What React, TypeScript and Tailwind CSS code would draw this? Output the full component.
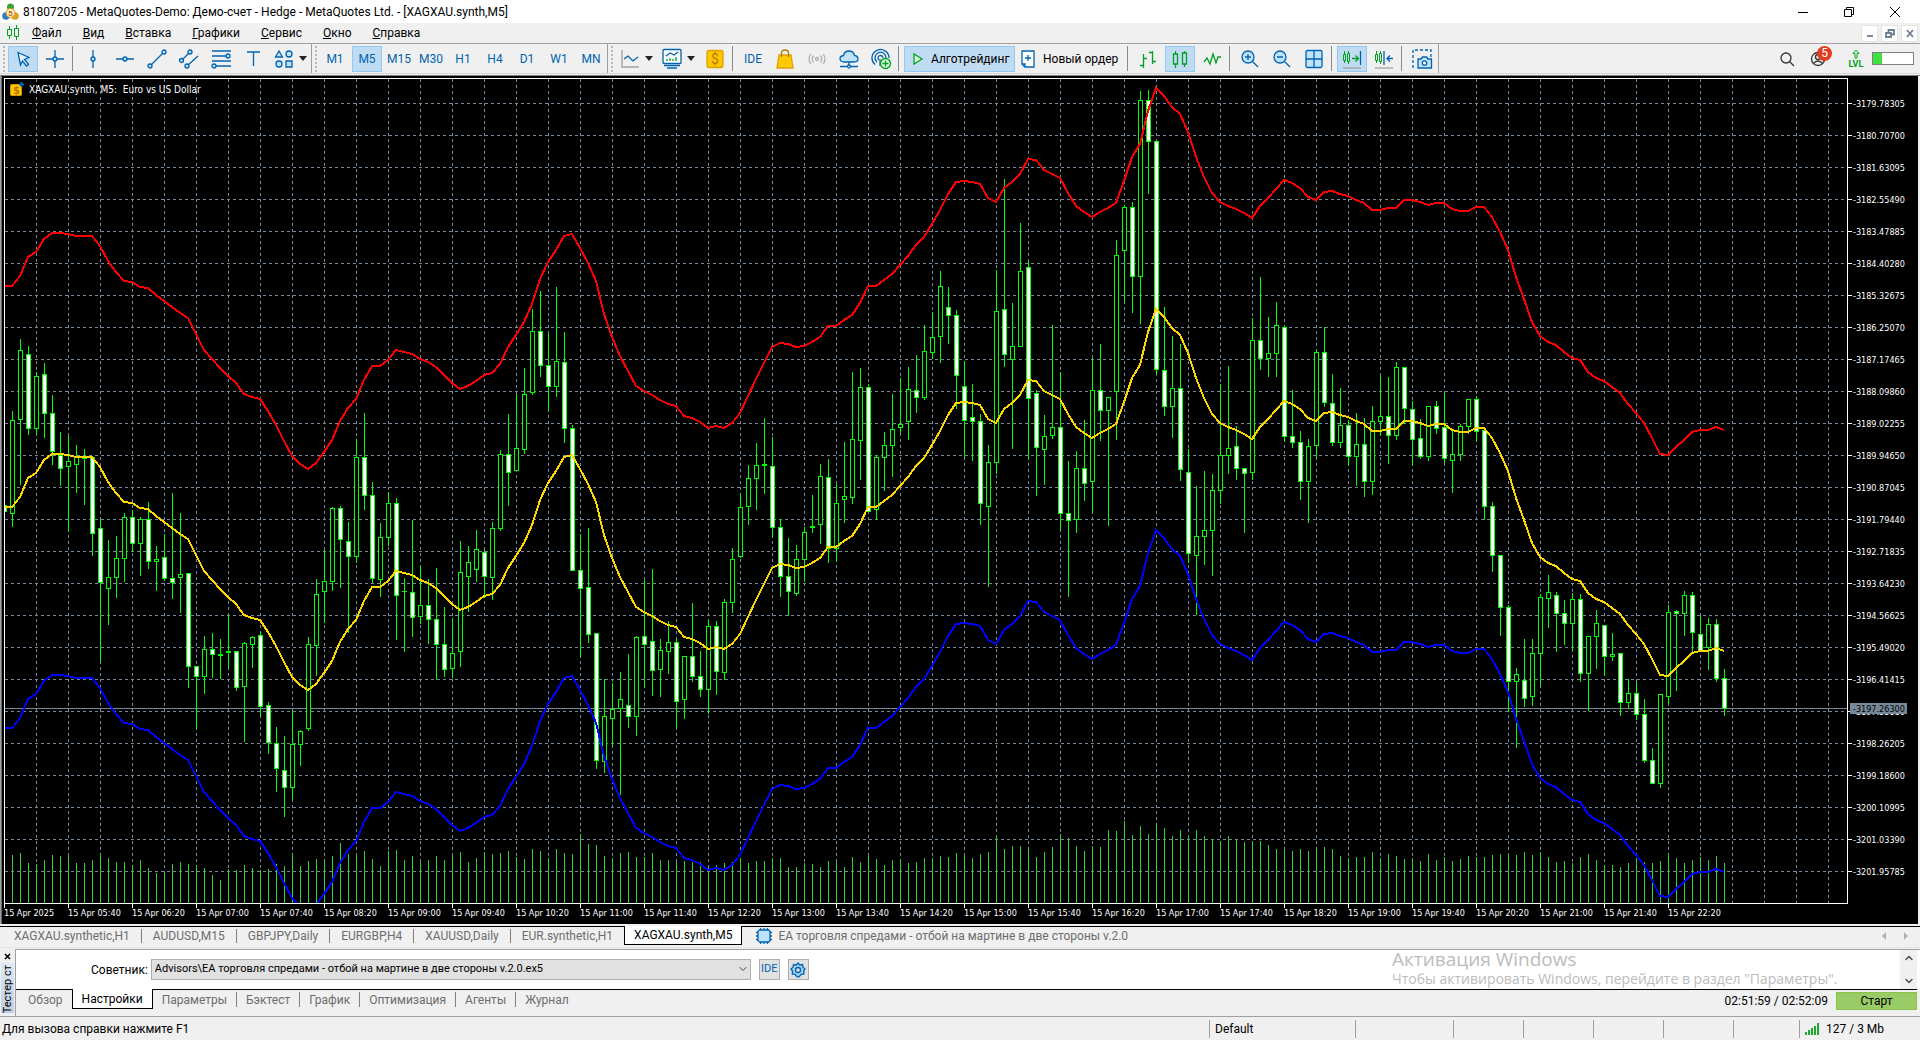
import type { ReactNode } from 'react';
import { ChevronDown, ChevronUp } from 'lucide-react';

// [high, body top, body bottom, low, 1 = rising / 0 = falling], in chart pixels
type Bar = [number, number, number, number, number];

const bars: Bar[] = [
  [505, 505, 511, 511, 0], [411, 420, 513, 526, 1], [339, 350, 419, 484, 1], [346, 354, 428, 434, 0], [372, 376, 428, 434, 1],
  [363, 374, 413, 437, 0], [395, 413, 451, 464, 0], [432, 455, 468, 485, 0], [436, 461, 466, 531, 1], [445, 456, 464, 492, 1],
  [449, 457, 458, 504, 1], [457, 457, 533, 555, 0], [519, 528, 582, 661, 0], [540, 577, 588, 624, 1], [536, 558, 577, 597, 1],
  [513, 517, 558, 581, 1], [510, 517, 543, 551, 0], [517, 519, 543, 575, 1], [502, 519, 561, 568, 0], [546, 559, 561, 590, 1],
  [534, 557, 578, 580, 0], [493, 578, 582, 598, 0], [513, 574, 577, 612, 1], [573, 573, 666, 687, 0], [666, 666, 676, 728, 0],
  [636, 649, 676, 693, 1], [633, 649, 654, 677, 0], [639, 654, 655, 678, 1], [615, 651, 652, 667, 1], [651, 651, 687, 690, 0],
  [642, 643, 686, 741, 1], [636, 637, 644, 667, 1], [632, 635, 706, 716, 0], [702, 705, 742, 753, 0], [727, 743, 768, 791, 0],
  [736, 770, 787, 816, 0], [710, 744, 787, 798, 1], [730, 731, 744, 765, 1], [637, 644, 728, 730, 1], [579, 594, 645, 675, 1],
  [550, 581, 591, 622, 1], [507, 508, 581, 590, 1], [506, 508, 539, 587, 0], [522, 541, 556, 632, 0], [439, 457, 556, 562, 1],
  [413, 457, 495, 509, 0], [482, 495, 578, 582, 0], [523, 537, 579, 596, 1], [492, 503, 537, 545, 1], [498, 503, 595, 639, 0],
  [578, 591, 591, 651, 1], [520, 592, 617, 636, 0], [566, 605, 616, 623, 1], [579, 605, 619, 643, 0], [568, 619, 644, 679, 0],
  [607, 644, 669, 676, 0], [618, 653, 668, 677, 1], [541, 572, 651, 666, 1], [546, 562, 576, 611, 1], [530, 549, 569, 581, 1],
  [550, 552, 576, 597, 0], [522, 528, 577, 599, 1], [450, 454, 528, 530, 1], [414, 454, 472, 505, 0], [394, 448, 470, 470, 1],
  [368, 394, 449, 453, 1], [309, 331, 392, 394, 1], [291, 331, 365, 376, 0], [334, 365, 386, 410, 0], [287, 361, 386, 396, 1],
  [332, 362, 428, 442, 0], [425, 428, 570, 570, 0], [534, 570, 588, 656, 0], [528, 587, 634, 642, 0], [633, 633, 760, 768, 0],
  [679, 716, 761, 772, 1], [683, 709, 718, 745, 1], [672, 699, 708, 794, 1], [654, 705, 716, 727, 0], [636, 637, 716, 735, 1],
  [580, 636, 644, 687, 0], [569, 641, 670, 695, 0], [639, 650, 669, 696, 1], [621, 642, 651, 673, 1], [639, 642, 701, 727, 0],
  [656, 656, 699, 718, 1], [603, 656, 676, 681, 0], [651, 676, 689, 696, 0], [620, 626, 689, 713, 1], [621, 626, 671, 694, 0],
  [599, 602, 672, 679, 1], [548, 559, 602, 612, 1], [493, 507, 556, 557, 1], [465, 478, 506, 524, 1], [443, 465, 478, 509, 1],
  [418, 464, 465, 493, 1], [437, 466, 527, 537, 0], [519, 527, 576, 596, 0], [538, 576, 591, 615, 0], [545, 559, 593, 595, 1],
  [527, 532, 559, 581, 1], [495, 526, 527, 532, 1], [464, 476, 524, 543, 1], [459, 477, 548, 562, 0], [484, 503, 548, 561, 1],
  [442, 496, 499, 522, 1], [372, 439, 497, 503, 1], [368, 387, 440, 479, 1], [384, 387, 511, 511, 0], [455, 457, 509, 519, 1],
  [432, 445, 457, 490, 1], [394, 429, 445, 476, 1], [378, 424, 427, 432, 1], [367, 389, 421, 439, 1], [355, 390, 397, 412, 0],
  [325, 351, 397, 399, 1], [312, 337, 352, 358, 1], [271, 286, 336, 362, 1], [287, 307, 315, 343, 0], [310, 315, 375, 408, 0],
  [361, 386, 420, 457, 0], [384, 417, 421, 460, 0], [414, 421, 503, 524, 0], [445, 462, 506, 586, 1], [270, 311, 462, 473, 1],
  [179, 309, 354, 366, 0], [303, 346, 359, 448, 1], [223, 271, 346, 346, 1], [261, 267, 398, 458, 0], [390, 393, 447, 495, 0],
  [415, 436, 449, 484, 1], [325, 427, 435, 438, 1], [372, 427, 513, 529, 0], [461, 513, 520, 596, 0], [451, 468, 519, 532, 1],
  [420, 468, 483, 500, 0], [358, 390, 481, 512, 1], [344, 390, 410, 440, 0], [397, 397, 410, 525, 1], [240, 255, 391, 439, 1],
  [205, 207, 250, 300, 1], [202, 207, 276, 312, 0], [91, 100, 276, 323, 1], [90, 100, 141, 193, 0], [141, 141, 369, 373, 0],
  [307, 370, 406, 415, 0], [336, 388, 406, 437, 1], [344, 388, 469, 480, 0], [449, 472, 553, 562, 0], [486, 536, 555, 614, 1],
  [471, 530, 536, 564, 1], [474, 490, 530, 575, 1], [384, 455, 490, 503, 1], [366, 448, 455, 473, 1], [426, 446, 468, 479, 0],
  [468, 468, 473, 532, 0], [318, 340, 472, 479, 1], [277, 340, 358, 369, 0], [317, 353, 358, 376, 1], [302, 325, 353, 376, 1],
  [326, 327, 436, 441, 0], [390, 436, 442, 447, 0], [431, 442, 481, 499, 0], [439, 446, 481, 522, 1], [350, 352, 445, 457, 1],
  [327, 352, 402, 406, 0], [374, 403, 442, 445, 0], [388, 425, 442, 447, 1], [420, 425, 456, 465, 0], [413, 444, 456, 485, 1],
  [418, 444, 481, 496, 0], [406, 421, 481, 494, 1], [375, 416, 421, 435, 1], [377, 416, 435, 463, 0], [362, 367, 435, 439, 1],
  [367, 367, 408, 423, 0], [401, 409, 439, 465, 0], [419, 438, 456, 458, 0], [406, 406, 456, 460, 1], [401, 406, 428, 433, 0],
  [393, 427, 458, 462, 0], [429, 454, 460, 492, 1], [424, 426, 454, 460, 1], [399, 399, 426, 433, 1], [396, 399, 431, 441, 0],
  [428, 430, 506, 519, 0], [502, 506, 555, 571, 0], [555, 555, 607, 635, 0], [605, 607, 681, 711, 0], [668, 674, 681, 747, 1],
  [639, 680, 698, 706, 0], [639, 653, 696, 705, 1], [594, 597, 653, 684, 1], [575, 592, 598, 627, 1], [592, 595, 613, 651, 0],
  [600, 613, 623, 644, 0], [593, 599, 623, 650, 1], [594, 599, 673, 681, 0], [636, 636, 673, 710, 1], [610, 623, 636, 668, 1],
  [625, 625, 656, 675, 0], [633, 654, 656, 660, 1], [653, 653, 702, 715, 0], [679, 693, 702, 707, 1], [682, 693, 714, 719, 0],
  [699, 714, 760, 762, 0], [748, 760, 783, 783, 0], [694, 694, 783, 787, 1], [605, 612, 696, 703, 1], [610, 611, 613, 690, 0],
  [591, 595, 613, 635, 1], [592, 595, 632, 651, 0], [616, 634, 650, 650, 0], [618, 624, 647, 669, 1], [619, 624, 678, 681, 0],
  [669, 678, 708, 715, 0],
];

const middle = [
  507, 507, 497, 478, 473, 460, 454, 454, 455, 457, 457, 457, 467, 482, 493, 502, 503, 508, 509, 516,
  522, 528, 534, 539, 555, 571, 580, 589, 597, 604, 615, 618, 620, 632, 646, 662, 677, 685, 690, 684,
  673, 661, 642, 629, 620, 601, 587, 587, 581, 571, 573, 575, 580, 583, 588, 596, 604, 610, 607, 602,
  596, 594, 585, 568, 556, 543, 525, 500, 483, 471, 457, 455, 469, 484, 502, 535, 558, 577, 592, 607,
  612, 616, 621, 625, 627, 637, 639, 643, 649, 647, 649, 644, 634, 617, 600, 584, 568, 564, 565, 568,
  567, 563, 558, 547, 547, 541, 536, 524, 507, 507, 501, 495, 486, 477, 466, 458, 445, 431, 415, 403,
  402, 403, 405, 419, 423, 409, 403, 395, 380, 381, 391, 395, 399, 414, 427, 433, 438, 433, 429, 424,
  402, 378, 365, 332, 309, 317, 328, 335, 353, 378, 398, 414, 423, 427, 430, 434, 439, 427, 419, 410,
  401, 404, 409, 418, 421, 413, 412, 415, 417, 421, 424, 431, 431, 429, 429, 421, 421, 423, 426, 424,
  424, 430, 432, 432, 428, 428, 438, 453, 471, 498, 520, 543, 557, 563, 566, 573, 579, 581, 593, 599,
  602, 608, 614, 625, 634, 644, 659, 675, 676, 668, 661, 653, 651, 651, 648, 651,
];

const volumes = [
  903, 855, 853, 863, 864, 860, 855, 856, 855, 863, 863, 860, 853, 858, 862, 862, 865, 860, 868, 873,
  873, 864, 862, 864, 865, 868, 875, 880, 869, 870, 865, 868, 870, 869, 864, 866, 853, 866, 861, 859,
  860, 856, 843, 854, 855, 851, 859, 866, 851, 850, 860, 856, 862, 860, 856, 860, 855, 852, 862, 858,
  852, 854, 853, 851, 857, 859, 849, 851, 858, 849, 853, 854, 834, 844, 845, 856, 858, 853, 852, 857,
  857, 853, 860, 860, 862, 861, 862, 862, 867, 865, 863, 862, 858, 863, 861, 861, 858, 858, 867, 867,
  863, 864, 867, 861, 862, 867, 857, 862, 856, 859, 865, 860, 859, 863, 862, 858, 858, 856, 857, 853,
  855, 858, 854, 852, 835, 849, 846, 846, 849, 857, 852, 847, 834, 838, 846, 851, 846, 847, 830, 831,
  821, 835, 826, 834, 824, 828, 836, 830, 836, 830, 836, 839, 841, 836, 840, 842, 842, 841, 845, 849,
  850, 851, 849, 851, 849, 847, 849, 856, 858, 857, 857, 852, 858, 854, 856, 859, 858, 861, 854, 860,
  857, 861, 859, 856, 857, 857, 855, 854, 854, 855, 852, 855, 852, 857, 862, 861, 863, 857, 854, 860,
  865, 865, 867, 863, 858, 862, 863, 861, 853, 858, 863, 860, 857, 860, 856, 863,
];

const BAND = 221;
const barX = (i: number) => 4 + i * 8;
const linePoints = (shift: number) => middle.map((y, i) => `${barX(i)},${y + shift}`).join(' ');

const columns = Array.from({ length: 57 }, (_, i) => 36 + i * 32);
const rows = Array.from({ length: 25 }, (_, i) => 103 + i * 32);

const timeLabel = (i: number) => {
  if (i === 0) return '15 Apr 2025';
  const minutes = 300 + i * 40;
  const hh = String(Math.floor(minutes / 60)).padStart(2, '0');
  const mm = String(minutes % 60).padStart(2, '0');
  return `15 Apr ${hh}:${mm}`;
};

function PriceChart() {
  return (
    <svg
      viewBox="0 76 1920 848"
      className="block h-auto w-full bg-black font-['DejaVu_Sans_Condensed',sans-serif] text-[9px]"
      role="img"
      aria-label="XAGXAU.synth, M5"
    >
      <defs>
        <clipPath id="plot">
          <rect x="5" y="79" width="1843" height="824" />
        </clipPath>
      </defs>
      <g shapeRendering="crispEdges">
        <rect x="0" y="76" width="1" height="848" fill="#a0a0a0" />
        <rect x="1" y="76" width="1" height="848" fill="#696969" />
        <rect x="1918" y="76" width="2" height="848" fill="#f0f0f0" />

        {/* Grid */}
        <g stroke="#778899" strokeDasharray="3 3">
          {columns.map((x) => (
            <line key={x} x1={x + 0.5} x2={x + 0.5} y1="79" y2="903" />
          ))}
          {rows.map((y) => (
            <line key={y} x1="5" x2="1848" y1={y + 0.5} y2={y + 0.5} />
          ))}
        </g>

        <g clipPath="url(#plot)">
          {volumes.map((y, i) => (
            <rect key={i} x={barX(i)} y={y} width="1" height={903 - y} fill="#32cd32" />
          ))}
          <rect x="5" y="708" width="1843" height="1" fill="#778899" />

          {bars.map(([high, top, bottom, low, up], i) => (
            <g key={i}>
              <rect x={barX(i)} y={high} width="1" height={low - high + 1} fill="#00ff00" />
              <rect x={barX(i) - 2} y={top} width="5" height={bottom - top + 1} fill="#00ff00" />
              {bottom - top > 1 && (
                <rect x={barX(i) - 1} y={top + 1} width="3" height={bottom - top - 1} fill={up ? '#000' : '#fff'} />
              )}
            </g>
          ))}

          <g fill="none" strokeWidth="2">
            <polyline points={linePoints(-BAND)} stroke="#ff0000" />
            <polyline points={linePoints(0)} stroke="#ffd700" />
            <polyline points={linePoints(BAND)} stroke="#0000ff" />
          </g>
        </g>

        {/* Frame and ticks */}
        <rect x="4.5" y="78.5" width="1843" height="825" fill="none" stroke="#fff" />
        {rows.map((y) => (
          <rect key={y} x="1848" y={y} width="4" height="1" fill="#fff" />
        ))}
        {Array.from({ length: 27 }, (_, i) => (
          <rect key={i} x={4 + i * 64} y="904" width="1" height="4" fill="#fff" />
        ))}
      </g>

      <g fill="#fff">
        {rows.map((y, i) => (
          <text key={y} x="1853" y={y + 4}>
            {(-3179.78305 - i * 0.92395).toFixed(5)}
          </text>
        ))}
        {Array.from({ length: 27 }, (_, i) => (
          <text key={i} x={4 + i * 64} y="916">
            {timeLabel(i)}
          </text>
        ))}
      </g>
      <rect x="1850" y="703" width="57" height="11" fill="#778899" />
      <text x="1853" y="712" fill="#000">-3197.26300</text>

      {/* Symbol caption */}
      <rect x="10.5" y="84.5" width="11" height="11" rx="1" fill="#ffc800" stroke="#d89400" />
      <text x="13" y="94" fill="#b87800" className="text-[11px] font-bold">$</text>
      <path d="M21.5 82v5M19 84.5h5" stroke="#0063b1" strokeWidth="2" />
      <text x="29" y="93" fill="#fff" className="text-[10px] whitespace-pre">
        {'XAGXAU.synth, M5:  Euro vs US Dollar'}
      </text>
    </svg>
  );
}

function Icon({ children, size = 22 }: { children: ReactNode; size?: number }) {
  return (
    <svg
      width={size}
      height={size}
      viewBox={`0 0 ${size} ${size}`}
      fill="none"
      stroke="#0063b1"
      strokeWidth="1.3"
      className="shrink-0"
      aria-hidden="true"
    >
      {children}
    </svg>
  );
}

const Caret = () => (
  <svg width="8" height="5" viewBox="0 0 8 5" aria-hidden="true">
    <path d="M0 0h8L4 5z" fill="#222" />
  </svg>
);

const Separator = () => <span className="h-[25px] w-1 border-l border-[#8a8a8a]" />;

const Grip = () => (
  <span className="flex w-[6px] flex-col items-center gap-[2px] pl-px">
    {Array.from({ length: 7 }, (_, i) => (
      <span key={i} className="size-[2px] bg-[#b8b8b8]" />
    ))}
  </span>
);

function ToolButton({
  label,
  active,
  className = 'w-[30px] justify-center',
  children,
}: {
  label: string;
  active?: boolean;
  className?: string;
  children: ReactNode;
}) {
  return (
    <button
      type="button"
      aria-label={label}
      className={`flex h-[26px] shrink-0 items-center ${className} ${
        active ? 'border border-[#90c8f6] bg-[#c0dcf3]' : ''
      }`}
    >
      {children}
    </button>
  );
}

const Group = ({ children }: { children: ReactNode }) => (
  <div className="flex h-full items-center gap-[2px] border-r border-[#a0a0a0] pr-px">
    <Grip />
    {children}
  </div>
);

const drawingTools = [
  { label: 'Вертикальная линия', icon: <><path d="M11 2v7M11 13v7" /><circle cx="11" cy="11" r="2" fill="#bfe3ff" /></> },
  { label: 'Горизонтальная линия', icon: <><path d="M2 11h7M13 11h7" /><circle cx="11" cy="11" r="2" fill="#bfe3ff" /></> },
  { label: 'Трендовая линия', icon: <><path d="M4 18L18 4" /><circle cx="4" cy="18" r="2" fill="#bfe3ff" /><circle cx="18" cy="4" r="2" fill="#bfe3ff" /></> },
  { label: 'Канал', icon: <><path d="M4 12l8-8M9 18L20 8" /><circle cx="3.500" cy="12.500" r="2" fill="#bfe3ff" /><circle cx="12" cy="4" r="2" fill="#bfe3ff" /><circle cx="9" cy="18" r="2" fill="#bfe3ff" /></> },
  { label: 'Фибоначчи', icon: <><path d="M2 3h19M2 8h14M2 13h19M6 18h15" /><circle cx="18" cy="8" r="2" fill="#bfe3ff" /><circle cx="4" cy="18" r="2" fill="#bfe3ff" /></> },
  { label: 'Текст', icon: <path d="M5 4h13M11.500 4v14" /> },
];

const timeframes = ['M1', 'M5', 'M15', 'M30', 'H1', 'H4', 'D1', 'W1', 'MN'];

function Toolbar() {
  return (
    <div className="flex h-8 items-stretch border-t border-[#a0a0a0] bg-[#f0f0f0]">
      <div className="flex h-[30px] flex-1 items-center border-b border-[#d8d8d8]">
        <Group>
          <ToolButton label="Курсор" active>
            <Icon><path d="M6 4.500l11 5-4.500 2 4 5-2 1.500-4-5-2 4z" fill="#e8f4ff" /></Icon>
          </ToolButton>
          <ToolButton label="Перекрестие">
            <Icon><path d="M11 2v7M11 13v7M2 11h7M13 11h7" /><circle cx="11" cy="11" r="2" fill="#bfe3ff" /></Icon>
          </ToolButton>
          <Separator />
          {drawingTools.map((tool) => (
            <ToolButton key={tool.label} label={tool.label}>
              <Icon>{tool.icon}</Icon>
            </ToolButton>
          ))}
          <ToolButton label="Объекты" className="w-10 justify-center gap-1">
            <Icon>
              <path d="M6 3l3.500 6h-7z" fill="#bfe3ff" />
              <circle cx="16" cy="6" r="3" fill="#bfe3ff" />
              <circle cx="6" cy="16" r="3" fill="#bfe3ff" />
              <path d="M13 13h6v6h-6z" fill="#bfe3ff" />
            </Icon>
            <Caret />
          </ToolButton>
        </Group>

        <Group>
          {timeframes.map((tf) => (
            <ToolButton key={tf} label={tf} active={tf === 'M5'}>
              <span className="text-[#0063b1]">{tf}</span>
            </ToolButton>
          ))}
        </Group>

        <Group>
          <ToolButton label="Тип графика" className="w-10 justify-center gap-1">
            <Icon><path d="M3 2v17h17" stroke="#a0a0a0" /><path d="M5 11l4-3 5 5 5-4" /></Icon>
            <Caret />
          </ToolButton>
          <ToolButton label="Индикаторы" className="w-10 justify-center gap-1">
            <Icon>
              <rect x="2" y="1.500" width="18" height="14" rx="1" fill="#fff" />
              <path d="M5 8l4-3 4 2 4-3" />
              <path d="M6 13v-2M9 13v-3M12 13v-2M15 13v-4" stroke="#00a020" />
              <path d="M3 17.500h16M6 20h10" strokeWidth="1.500" />
            </Icon>
            <Caret />
          </ToolButton>
          <ToolButton label="Торговля">
            <Icon>
              <rect x="3" y="2.500" width="16" height="17" rx="2" fill="#ffc800" stroke="#e0a000" />
              <text x="11" y="16" textAnchor="middle" fill="#b87800" stroke="none" className="text-[14px]">$</text>
            </Icon>
          </ToolButton>
          <Separator />
          <ToolButton label="IDE"><span className="text-[#0063b1]">IDE</span></ToolButton>
          <ToolButton label="Маркет">
            <Icon>
              <path d="M5 7h12l2 13H3z" fill="#ffc800" stroke="#e0a000" />
              <path d="M7.500 9V5q0-3 3.500-3t3.500 3v4" stroke="#b87800" />
            </Icon>
          </ToolButton>
          <ToolButton label="Сигналы">
            <Icon>
              <g stroke="#b0b0b0">
                <circle cx="11" cy="11" r="1.500" />
                <path d="M7.500 7.500q-2.500 3.500 0 7M14.500 7.500q2.500 3.500 0 7M4.800 6q-3.500 5 0 10M17.200 6q3.500 5 0 10" />
              </g>
            </Icon>
          </ToolButton>
          <ToolButton label="VPS">
            <Icon>
              <path d="M6 14q-4 0-4-3.500Q2 8 5.500 7.500 6.500 3 11 3q4.500 0 5.500 4.500 3.500.5 3.500 3.300Q20 14 16 14z" fill="#bfe3ff" />
              <path d="M11 14v4M2 18.500h7M13 18.500h7" /><circle cx="11" cy="18.500" r="1.500" />
            </Icon>
          </ToolButton>
          <ToolButton label="Тестер">
            <Icon>
              <path d="M5 16.500A8.500 8.500 0 1 1 19 10" /><path d="M7 14a5.500 5.500 0 1 1 9-4" />
              <path d="M9 12a2.500 2.500 0 1 1 4-2" /><path d="M10 11v7" />
              <circle cx="15.500" cy="15.500" r="5" fill="#e0ffe0" stroke="#00a020" />
              <path d="M12.500 15.500h6M15.500 12.500v6" stroke="#00a020" />
            </Icon>
          </ToolButton>
          <Separator />
          <ToolButton label="Алготрейдинг" active className="w-[111px] gap-0.5 pl-0.5">
            <Icon><path d="M7 6v10l8-5z" fill="#e0ffe0" stroke="#00a020" /></Icon>
            <span>Алготрейдинг</span>
          </ToolButton>
          <ToolButton label="Новый ордер" className="w-[108px] gap-1">
            <Icon>
              <path d="M5 3h12v16H8l-3-3z" fill="#fff" /><path d="M5 16h3v3" />
              <path d="M8 10h6M11 7v6" />
            </Icon>
            <span>Новый ордер</span>
          </ToolButton>
          <Separator />
          <ToolButton label="Бары">
            <Icon><path d="M6.500 6v14M3 17.500h3.500M6.500 10.500H10M15.500 3v13M12 4.500h3.500M15.500 13.500H19" stroke="#00a020" /></Icon>
          </ToolButton>
          <ToolButton label="Свечи" active>
            <Icon><path d="M6.500 3v3M6.500 16v4M4.500 6h4v10h-4zM15.500 3v2M15.500 16v3M13.500 5h4v11h-4z" stroke="#00a020" /></Icon>
          </ToolButton>
          <ToolButton label="Линия">
            <Icon><path d="M3 14l3-4 3 6 3-10 3 9 2-6 3 0" stroke="#00a020" /></Icon>
          </ToolButton>
          <Separator />
          <ToolButton label="Приблизить">
            <Icon><circle cx="9" cy="9" r="6" fill="#bfe3ff" /><path d="M6 9h6M9 6v6M13.500 13.500L19 19" /></Icon>
          </ToolButton>
          <ToolButton label="Отдалить">
            <Icon><circle cx="9" cy="9" r="6" fill="#bfe3ff" /><path d="M6 9h6M13.500 13.500L19 19" /></Icon>
          </ToolButton>
          <ToolButton label="Мозаика">
            <Icon><rect x="3" y="2.500" width="16" height="17" rx="1.500" fill="#bfe3ff" /><path d="M11 3v16M3 11h16" /></Icon>
          </ToolButton>
          <Separator />
          <ToolButton label="Автопрокрутка" active>
            <Icon>
              <g strokeWidth="1" stroke="#00a020">
                <path d="M3.500 3v3M3.500 12v3M2.500 6.500h2v6h-2zM7.500 3v2M7.500 13v3M6.500 5.500h2v8h-2z" />
                <path d="M11 10.500h6M14.500 7.500l3 3-3 3" strokeWidth="1.300" />
              </g>
              <path d="M19.500 3v14" /><path d="M2 20h18" stroke="#a0a0a0" />
            </Icon>
          </ToolButton>
          <ToolButton label="Сдвиг графика">
            <Icon>
              <path d="M3.500 3v3M3.500 12v3M2.500 6.500h2v6h-2zM7.500 3v2M7.500 13v3M6.500 5.500h2v8h-2z" strokeWidth="1" stroke="#00a020" />
              <path d="M11 3v14M20 10.500h-6M17 7.500l-3 3 3 3" /><path d="M2 20h18" stroke="#a0a0a0" />
            </Icon>
          </ToolButton>
          <Separator />
          <ToolButton label="Снимок экрана">
            <Icon>
              <path d="M2 20V2h18v7" strokeDasharray="3 2" />
              <path d="M7 11h3l1.500-2h4l1.500 2h3.500v9H7z" fill="#bfe3ff" /><circle cx="13.500" cy="15" r="2.200" fill="#fff" />
            </Icon>
          </ToolButton>
        </Group>

        <div className="ml-auto flex items-center gap-2 pr-[6px]">
          <button type="button" aria-label="Поиск">
            <Icon><circle cx="10" cy="10" r="5" stroke="#333" /><path d="M13.500 13.500L18 18" stroke="#333" /></Icon>
          </button>
          <button type="button" aria-label="Уведомления" className="relative mr-[10px] ml-0.5">
            <Icon>
              <circle cx="10" cy="11" r="6.500" stroke="#333" />
              <circle cx="10" cy="9" r="2.500" stroke="#333" /><path d="M5.500 15.500q4.500-5 9 0" stroke="#333" />
            </Icon>
            <span className="absolute top-[-2px] left-[9px] flex size-[15px] items-center justify-center rounded-full bg-[#e03c20] leading-none text-white">
              5
            </span>
          </button>
          <div className="flex w-4 flex-col items-center gap-px">
            <svg width="8" height="10" viewBox="0 0 8 10" fill="none" stroke="#00b020" aria-hidden="true">
              <path d="M4 1L1 4.500h2V9h2V4.500h2z" />
            </svg>
            <span className="text-[9px] leading-none font-bold text-[#00a020]">LVL</span>
          </div>
          <div className="h-[13px] w-[42px] border border-[#808080] bg-white">
            <div className="h-full w-[9px] bg-[#40e040]" />
          </div>
        </div>
      </div>
    </div>
  );
}

function TitleBar() {
  return (
    <header className="flex h-[23px] items-center bg-white px-[2px]">
      <svg width="17" height="18" viewBox="0 0 17 18" aria-hidden="true">
        <circle cx="8.500" cy="4" r="3.500" fill="#3f9e3a" />
        <circle cx="4" cy="13" r="3.800" fill="#2a7cc7" />
        <circle cx="13" cy="13" r="3.800" fill="#e0a020" />
        <circle cx="8.500" cy="10" r="4.500" fill="#fff3d8" stroke="#d89400" />
        <text x="8.500" y="13" textAnchor="middle" fill="#d06000" className="text-[8px] font-bold">5</text>
      </svg>
      <h1 className="ml-1">
        81807205 - MetaQuotes-Demo: Демо-счет - Hedge - MetaQuotes Ltd. - [XAGXAU.synth,M5]
      </h1>
      <div className="ml-auto flex">
        <button type="button" aria-label="Свернуть" className="flex w-[46px] justify-center">
          <Icon size={12}><path d="M1 6.500h10" stroke="#000" strokeWidth="1" /></Icon>
        </button>
        <button type="button" aria-label="Развернуть" className="flex w-[46px] justify-center">
          <Icon size={12}><path d="M1.500 3.500h7v7h-7zM3.500 3.500v-2h7v7h-2" stroke="#000" strokeWidth="1" /></Icon>
        </button>
        <button type="button" aria-label="Закрыть" className="flex w-[46px] justify-center">
          <Icon size={12}><path d="M1 1l10 10M11 1L1 11" stroke="#000" strokeWidth="1" /></Icon>
        </button>
      </div>
    </header>
  );
}

const menu = ['Файл', 'Вид', 'Вставка', 'Графики', 'Сервис', 'Окно', 'Справка'];

function MenuBar() {
  return (
    <nav className="flex h-5 items-center bg-[#f0f0f0] pl-[6px]">
      <svg width="14" height="16" viewBox="0 0 14 16" fill="none" stroke="#00a020" aria-hidden="true">
        <path d="M3.500 1v3M3.500 11v3M1.500 4.500h4v6h-4zM10.500 0v3M10.500 12v3M8.500 3.500h4v8h-4z" />
      </svg>
      <ul className="ml-3 flex gap-[21px]">
        {menu.map((item) => (
          <li key={item}>
            <a href="#" className="block">
              <span className="underline">{item[0]}</span>
              {item.slice(1)}
            </a>
          </li>
        ))}
      </ul>
      <div className="ml-auto flex gap-[3px] pr-[2px]">
        {[
          ['Свернуть окно', 'M3 9h6'],
          ['Восстановить окно', 'M2 6h5v4H2zM4.500 6V3H10v4.500H7'],
          ['Закрыть окно', 'M3 3l6 7M9 3l-6 7'],
        ].map(([label, path]) => (
          <button
            key={label}
            type="button"
            aria-label={label}
            className="flex size-[17px] items-center justify-center border border-[#e3e3e3] bg-white"
          >
            <svg width="12" height="12" viewBox="0 0 12 12" fill="none" stroke="#6e7f92" strokeWidth="1.800" aria-hidden="true">
              <path d={path} />
            </svg>
          </button>
        ))}
      </div>
    </nav>
  );
}

const chartTabs = ['XAGXAU.synthetic,H1', 'AUDUSD,M15', 'GBPJPY,Daily', 'EURGBP,H4', 'XAUUSD,Daily', 'EUR.synthetic,H1'];

function ChartTabs() {
  return (
    <div className="flex h-6 flex-col border-b border-[#e3e3e3] bg-[#f0f0f0] pt-[2px]">
      <div className="flex h-[19px] border-t border-black text-[#6d6d6d]">
        <div className="flex pl-[3px]">
          {chartTabs.map((tab, i) => (
            <button
              key={tab}
              type="button"
              className={`my-[2px] px-[11px] leading-none ${i < chartTabs.length - 1 ? 'border-r border-[#808080]' : ''}`}
            >
              {tab}
            </button>
          ))}
        </div>
        <button type="button" className="-mt-px border-x border-b border-black bg-white px-[9px] leading-none text-black">
          XAGXAU.synth,M5
        </button>
        <button type="button" className="flex items-center gap-[6px] pl-[14px] leading-none">
          <Icon size={16}>
            <path d="M4.500 0v16M8 0v16M11.500 0v16M0 4.500h16M0 8h16M0 11.500h16" />
            <rect x="2" y="2" width="12" height="12" rx="2" fill="#bfe3ff" />
          </Icon>
          EA торговля спредами - отбой на мартине в две стороны v.2.0
        </button>
        <div className="ml-auto flex items-center gap-4 pr-3">
          <button type="button" aria-label="Назад">
            <svg width="5" height="8" viewBox="0 0 5 8"><path d="M4 0v8L0 4z" fill="#b0b0b0" /></svg>
          </button>
          <button type="button" aria-label="Вперёд">
            <svg width="5" height="8" viewBox="0 0 5 8"><path d="M1 0v8l4-4z" fill="#b0b0b0" /></svg>
          </button>
        </div>
      </div>
    </div>
  );
}

const testerTabs = ['Обзор', 'Настройки', 'Параметры', 'Бэктест', 'График', 'Оптимизация', 'Агенты', 'Журнал'];

function StrategyTester() {
  return (
    <section className="flex h-[68px] bg-[#f0f0f0] pt-px">
      <div className="flex w-[15px] shrink-0 flex-col items-center">
        <button type="button" aria-label="Закрыть" className="flex h-[14px] items-center">
          <svg width="7" height="7" viewBox="0 0 7 7"><path d="M1 1l5 5M6 1L1 6" stroke="#000" strokeWidth="1.600" /></svg>
        </button>
        <div className="flex h-[50px] w-[13px] items-center bg-gradient-to-b from-[#dce8f5] to-[#bfd0e2] text-[11px] leading-[13px] [writing-mode:sideways-lr]">
          Тестер ст
        </div>
      </div>
      <div className="flex min-w-0 flex-1 flex-col border-t border-l border-[#a0a0a0]">
        <div className="flex h-[39px] bg-white">
          <div className="flex items-center pl-[75px]">
            <label htmlFor="advisor">Советник:</label>
            <div className="relative ml-[3px] w-[600px]">
              <select id="advisor" className="block h-[21px] w-full appearance-none border border-[#adadad] bg-[#e1e1e1] pl-[3px] text-[11px]">
                <option>Advisors\EA торговля спредами - отбой на мартине в две стороны v.2.0.ex5</option>
              </select>
              <ChevronDown className="pointer-events-none absolute top-1 right-[2px] size-3 text-[#444]" strokeWidth={2} />
            </div>
            <button type="button" className="ml-2 flex size-[21px] items-center justify-center border border-[#adadad] bg-[#e1e1e1] text-[11px] text-[#0063b1]">
              IDE
            </button>
            <button type="button" aria-label="Настройки советника" className="ml-2 flex size-[21px] items-center justify-center border border-[#adadad] bg-[#e1e1e1]">
              <Icon size={16}>
                <path d="M8 1l1.800 2 2.700-.5.5 2.700 2 1.800-1.300 2 .3 3-2.700.3L9 14.800H7l-2-2.500-2.700-.3.200-3L1 7l2-1.800.5-2.700 2.700.5z" fill="#9fd0f5" />
                <circle cx="8" cy="8" r="2.500" fill="#e1e1e1" />
              </Icon>
            </button>
          </div>
          <div className="ml-auto w-[508px] font-['Open_Sans','Noto_Sans',sans-serif] whitespace-nowrap text-[#bcbcbc]">
            <p className="text-[19px] leading-[18px]">Активация Windows</p>
            <p className="text-[14px] leading-[22px]">Чтобы активировать Windows, перейдите в раздел "Параметры".</p>
          </div>
          <div className="mr-[3px] flex w-[17px] flex-col items-center justify-between bg-[#f0f0f0] py-[2px] text-[#505050]">
            <ChevronUp size={12} strokeWidth={3} />
            <ChevronDown size={12} strokeWidth={3} />
          </div>
        </div>
        <div className="mr-[3px] flex h-[23px] border-t border-black">
          <div className="flex h-[19px] pl-[3px] text-[#6d6d6d]">
            {testerTabs.map((tab, i) =>
              tab === 'Настройки' ? (
                <button key={tab} type="button" className="-mt-px border-x border-b border-black bg-white px-[9px] leading-none text-black">
                  {tab}
                </button>
              ) : (
                <button
                  key={tab}
                  type="button"
                  className={`my-[2px] px-[9px] leading-none ${i > 1 && i < testerTabs.length - 1 ? 'border-r border-[#808080]' : ''}`}
                >
                  {tab}
                </button>
              ),
            )}
          </div>
          <div className="ml-auto flex items-center gap-2">
            <span>02:51:59 / 02:52:09</span>
            <button type="button" className="h-[18px] w-[81px] border border-[#8bc34a] bg-[#99cc66] leading-none">
              Старт
            </button>
          </div>
        </div>
      </div>
    </section>
  );
}

function StatusBar() {
  return (
    <footer className="flex h-6 items-center border-t border-[#a0a0a0] bg-[#f0f0f0] pl-[2px]">
      <p className="flex-1">Для вызова справки нажмите F1</p>
      <div className="flex h-[18px] w-[146px] items-center border-l border-[#a0a0a0] pl-[5px]">Default</div>
      <div className="h-[18px] w-[98px] border-l border-[#a0a0a0]" />
      {[0, 1, 2, 3].map((i) => (
        <div key={i} className="h-[18px] w-[70px] border-l border-[#a0a0a0]" />
      ))}
      <div className="h-[18px] w-[66px] border-l border-[#a0a0a0]" />
      <div className="flex h-[18px] w-[121px] items-center gap-[6px] border-l border-[#a0a0a0] pl-[5px]">
        <svg width="15" height="12" viewBox="0 0 15 12" aria-hidden="true">
          <path d="M0 9h2v3H0zM3 7h2v5H3zM6 5h2v7H6zM9 3h2v9H9zM12 0h2v12h-2z" fill="#20a830" />
        </svg>
        127 / 3 Mb
      </div>
    </footer>
  );
}

export default function App() {
  return (
    <div className="min-h-screen overflow-hidden bg-[#f0f0f0] font-[Roboto,'Open_Sans',sans-serif] text-[12px] whitespace-nowrap text-black">
      <TitleBar />
      <MenuBar />
      <Toolbar />
      <main className="border-t border-[#808080]">
        <PriceChart />
      </main>
      <ChartTabs />
      <StrategyTester />
      <StatusBar />
    </div>
  );
}
